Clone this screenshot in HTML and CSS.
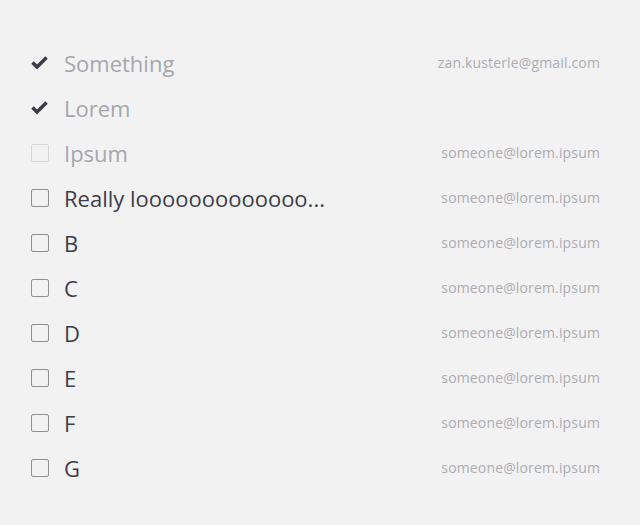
FILE: index.html
```
<!DOCTYPE html>
<html>
<head>
<meta charset="utf-8">
<link rel="stylesheet" href="styles.css">
</head>
<body>
<ul class="list">
  <li class="row done">
    <span class="mark"><svg width="18" height="14" viewBox="0 0 18 14"><polyline points="1.5,6.5 6,11 15.5,1.5" fill="none" stroke="#3b3b48" stroke-width="3.5" stroke-linejoin="miter" stroke-linecap="butt"/></svg></span>
    <span class="title">Something</span>
    <span class="email">zan.kusterle@gmail.com</span>
  </li>
  <li class="row done">
    <span class="mark"><svg width="18" height="14" viewBox="0 0 18 14"><polyline points="1.5,6.5 6,11 15.5,1.5" fill="none" stroke="#3b3b48" stroke-width="3.5" stroke-linejoin="miter" stroke-linecap="butt"/></svg></span>
    <span class="title">Lorem</span>
    <span class="email"></span>
  </li>
  <li class="row disabled">
    <span class="mark"><span class="box"></span></span>
    <span class="title">Ipsum</span>
    <span class="email">someone@lorem.ipsum</span>
  </li>
  <li class="row">
    <span class="mark"><span class="box"></span></span>
    <span class="title">Really looooooooooooo...</span>
    <span class="email">someone@lorem.ipsum</span>
  </li>
  <li class="row">
    <span class="mark"><span class="box"></span></span>
    <span class="title">B</span>
    <span class="email">someone@lorem.ipsum</span>
  </li>
  <li class="row">
    <span class="mark"><span class="box"></span></span>
    <span class="title">C</span>
    <span class="email">someone@lorem.ipsum</span>
  </li>
  <li class="row">
    <span class="mark"><span class="box"></span></span>
    <span class="title">D</span>
    <span class="email">someone@lorem.ipsum</span>
  </li>
  <li class="row">
    <span class="mark"><span class="box"></span></span>
    <span class="title">E</span>
    <span class="email">someone@lorem.ipsum</span>
  </li>
  <li class="row">
    <span class="mark"><span class="box"></span></span>
    <span class="title">F</span>
    <span class="email">someone@lorem.ipsum</span>
  </li>
  <li class="row">
    <span class="mark"><span class="box"></span></span>
    <span class="title">G</span>
    <span class="email">someone@lorem.ipsum</span>
  </li>
</ul>
</body>
</html>
```
FILE: styles.css
```
html, body {
  margin: 0;
  padding: 0;
  background: #f2f2f2;
  font-family: "Open Sans", sans-serif;
}
.list {
  list-style: none;
  margin: 0;
  padding: 40px 40px 0 32px;
}
.row {
  display: flex;
  align-items: center;
  height: 45px;
}
.mark {
  width: 32px;
  flex: none;
  display: flex;
  align-items: center;
}
.mark svg {
  display: block;
  margin-left: -1px;
}
.box {
  display: block;
  width: 16px;
  height: 16px;
  margin-left: -1px;
  border: 1px solid #8e8e94;
  border-radius: 2px;
  box-sizing: content-box;
}
.title {
  flex: 1;
  font-size: 22px;
  color: #3d3d4a;
}
.done .title, .disabled .title {
  color: #a6a6ae;
}
.disabled .box {
  border-color: #d6d6da;
}
.email {
  font-size: 14px;
  letter-spacing: 0.15px;
  color: #acacb2;
}
```
